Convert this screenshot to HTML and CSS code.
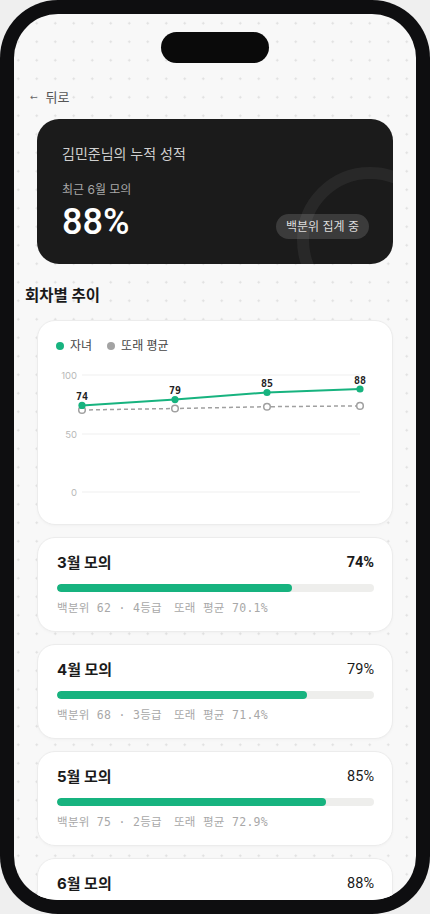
FILE: index.html
```html
<!DOCTYPE html>
<html lang="ko">
<head>
<meta charset="utf-8">
<title>누적 성적</title>
<link rel="stylesheet" href="styles.css">
</head>
<body>
<div class="phone">
  <div class="screen">
    <div class="island"></div>
    <div class="content">
      <div class="back"><span class="arrow">←</span>뒤로</div>

      <section class="hero">
        <div class="ring"></div>
        <div class="hero-title">김민준님의 누적 성적</div>
        <div class="hero-sub">최근 6월 모의</div>
        <div class="hero-row">
          <div class="hero-score">88%</div>
          <div class="badge">백분위 집계 중</div>
        </div>
      </section>

      <h2 class="section-title">회차별 추이</h2>

      <section class="chart-card">
        <div class="legend">
          <span class="legend-item"><span class="dot dot-green"></span>자녀</span>
          <span class="legend-item"><span class="dot dot-gray"></span>또래 평균</span>
        </div>
        <svg class="chart" width="354" height="169" viewBox="0 0 354 169">
          <g class="grid">
            <line x1="44" y1="20" x2="322" y2="20"/>
            <line x1="44" y1="79" x2="322" y2="79"/>
            <line x1="44" y1="137" x2="322" y2="137"/>
          </g>
          <g class="axis">
            <text x="39" y="23.5">100</text>
            <text x="39" y="82.5">50</text>
            <text x="39" y="140.5">0</text>
          </g>
          <polyline class="avg-line" points="44,55 137,53.5 229,51.7 322,50.9"/>
          <g class="avg-pt">
            <circle cx="44" cy="55" r="3.3"/>
            <circle cx="137" cy="53.5" r="3.3"/>
            <circle cx="229" cy="51.7" r="3.3"/>
            <circle cx="322" cy="50.9" r="3.3"/>
          </g>
          <polyline class="kid-line" points="44,50.4 137,44.6 229,37.5 322,34"/>
          <g class="kid-pt">
            <circle cx="44" cy="50.4" r="3.6"/>
            <circle cx="137" cy="44.6" r="3.6"/>
            <circle cx="229" cy="37.5" r="3.6"/>
            <circle cx="322" cy="34" r="3.6"/>
          </g>
          <g class="val">
            <text x="44" y="45">74</text>
            <text x="137" y="39">79</text>
            <text x="229" y="32">85</text>
            <text x="322" y="28.5">88</text>
          </g>
        </svg>
      </section>

      <section class="exam">
        <div class="exam-head"><span class="exam-name">3월 모의</span><span class="exam-pct strong">74%</span></div>
        <div class="track"><div class="fill" style="width:74%"></div></div>
        <div class="meta"><span>백분위 62 · 4등급</span><span class="meta-avg">또래 평균 70.1%</span></div>
      </section>

      <section class="exam">
        <div class="exam-head"><span class="exam-name">4월 모의</span><span class="exam-pct">79%</span></div>
        <div class="track"><div class="fill" style="width:79%"></div></div>
        <div class="meta"><span>백분위 68 · 3등급</span><span class="meta-avg">또래 평균 71.4%</span></div>
      </section>

      <section class="exam">
        <div class="exam-head"><span class="exam-name">5월 모의</span><span class="exam-pct">85%</span></div>
        <div class="track"><div class="fill" style="width:85%"></div></div>
        <div class="meta"><span>백분위 75 · 2등급</span><span class="meta-avg">또래 평균 72.9%</span></div>
      </section>

      <section class="exam">
        <div class="exam-head"><span class="exam-name">6월 모의</span><span class="exam-pct">88%</span></div>
        <div class="track"><div class="fill" style="width:88%"></div></div>
      </section>
    </div>
  </div>
</div>
</body>
</html>
```

FILE: styles.css
```css
* { box-sizing: border-box; }

html, body {
  margin: 0;
  padding: 0;
}

body {
  width: 430px;
  height: 914px;
  overflow: hidden;
  background: #efefef;
  font-family: "Inter", "Noto Sans CJK KR", sans-serif;
  color: #1a1a1a;
}

.phone {
  width: 430px;
  height: 914px;
  padding: 14px;
  border-radius: 58px;
  background: #0e0e10;
}

.screen {
  position: relative;
  width: 100%;
  height: 886px;
  border-radius: 44px;
  overflow: hidden;
  background-color: #f8f8f8;
  background-image: radial-gradient(circle, #dedede 0.9px, transparent 1.3px);
  background-size: 18.5px 18.5px;
  background-position: -5px 0px;
}

.island {
  position: absolute;
  top: 18px;
  left: 147px;
  width: 108px;
  height: 31px;
  border-radius: 16px;
  background: #0a0a0a;
  z-index: 2;
}

.content {
  padding: 73px 23px 0 23px;
}

.back {
  height: 20px;
  line-height: 20px;
  margin-left: -7px;
  font-size: 13px;
  color: #555;
  display: flex;
  align-items: center;
}

.arrow {
  font-family: "DejaVu Sans", sans-serif;
  font-size: 9px;
  margin-right: 8px;
  color: #666;
}

.hero {
  position: relative;
  overflow: hidden;
  margin-top: 12px;
  height: 145px;
  border-radius: 22px;
  background: #1b1b1b;
  padding: 25px 24px 22px 25px;
  color: #fff;
}

.ring {
  position: absolute;
  left: 260px;
  top: 48px;
  width: 146px;
  height: 146px;
  border-radius: 50%;
  border: 12px solid rgba(255, 255, 255, 0.06);
}

.hero-title {
  position: relative;
  font-size: 14px;
  line-height: 20px;
  color: #cfcfcf;
}

.hero-sub {
  position: relative;
  margin-top: 17px;
  font-size: 12px;
  line-height: 18px;
  color: #a8a8a8;
}

.hero-row {
  position: relative;
  margin-top: 3px;
  display: flex;
  justify-content: space-between;
  align-items: flex-end;
}

.hero-score {
  font-family: "Roboto", "Inter", sans-serif;
  font-size: 36px;
  line-height: 40px;
  font-weight: 500;
}

.badge {
  margin-bottom: 3px;
  height: 25px;
  line-height: 25px;
  padding: 0 10px;
  border-radius: 13px;
  background: rgba(255, 255, 255, 0.14);
  font-size: 12px;
  color: #dcdcdc;
}

.section-title {
  margin: 21px 0 0 -12px;
  height: 22px;
  line-height: 22px;
  font-size: 15.5px;
  font-weight: 700;
  color: #1a1a1a;
}

.chart-card {
  margin-top: 13px;
  background: #fff;
  border: 1px solid #ececec;
  border-radius: 18px;
  padding-top: 16px;
  box-shadow: 0 1px 3px rgba(0, 0, 0, 0.03);
}

.legend {
  display: flex;
  height: 18px;
  line-height: 18px;
  padding-left: 18px;
  font-size: 12px;
  color: #444;
}

.legend-item {
  display: flex;
  align-items: center;
  margin-right: 15px;
}

.dot {
  width: 8px;
  height: 8px;
  border-radius: 50%;
  margin-right: 6px;
}

.dot-green { background: #17b37f; }
.dot-gray { background: #a3a3a3; }

.chart {
  display: block;
}

.grid line {
  stroke: #efefef;
  stroke-width: 1;
}

.axis text {
  font-family: "Inter", sans-serif;
  font-size: 9.5px;
  fill: #b8b8b8;
  text-anchor: end;
}

.avg-line {
  fill: none;
  stroke: #a0a0a0;
  stroke-width: 1.5;
  stroke-dasharray: 4 3;
}

.avg-pt circle {
  fill: #fff;
  stroke: #a0a0a0;
  stroke-width: 1.5;
}

.kid-line {
  fill: none;
  stroke: #17b37f;
  stroke-width: 2;
}

.kid-pt circle {
  fill: #17b37f;
}

.val text {
  font-family: "DejaVu Sans Mono", monospace;
  font-size: 10px;
  font-weight: 700;
  fill: #222;
  text-anchor: middle;
}

.exam {
  margin-top: 12px;
  height: 95px;
  background: #fff;
  border: 1px solid #ececec;
  border-radius: 18px;
  padding: 15px 18px 0 19px;
  box-shadow: 0 1px 3px rgba(0, 0, 0, 0.03);
}

.exam-head {
  display: flex;
  justify-content: space-between;
  align-items: center;
  height: 20px;
  line-height: 20px;
}

.exam-name {
  font-size: 15px;
  font-weight: 700;
  color: #1a1a1a;
}

.exam-pct {
  font-family: "Roboto", "Inter", sans-serif;
  font-size: 14.5px;
  color: #1a1a1a;
}

.exam-pct.strong {
  font-weight: 700;
}

.track {
  margin-top: 11px;
  height: 8px;
  border-radius: 4px;
  background: #eeeeec;
  overflow: hidden;
}

.fill {
  height: 100%;
  border-radius: 4px;
  background: #17b37f;
}

.meta {
  margin-top: 8px;
  height: 16px;
  line-height: 16px;
  font-family: "DejaVu Sans Mono", "Noto Sans CJK KR", monospace;
  font-size: 11.5px;
  letter-spacing: 0.3px;
  color: #a8a8a8;
  white-space: nowrap;
}

.meta-avg {
  margin-left: 12px;
}
```
